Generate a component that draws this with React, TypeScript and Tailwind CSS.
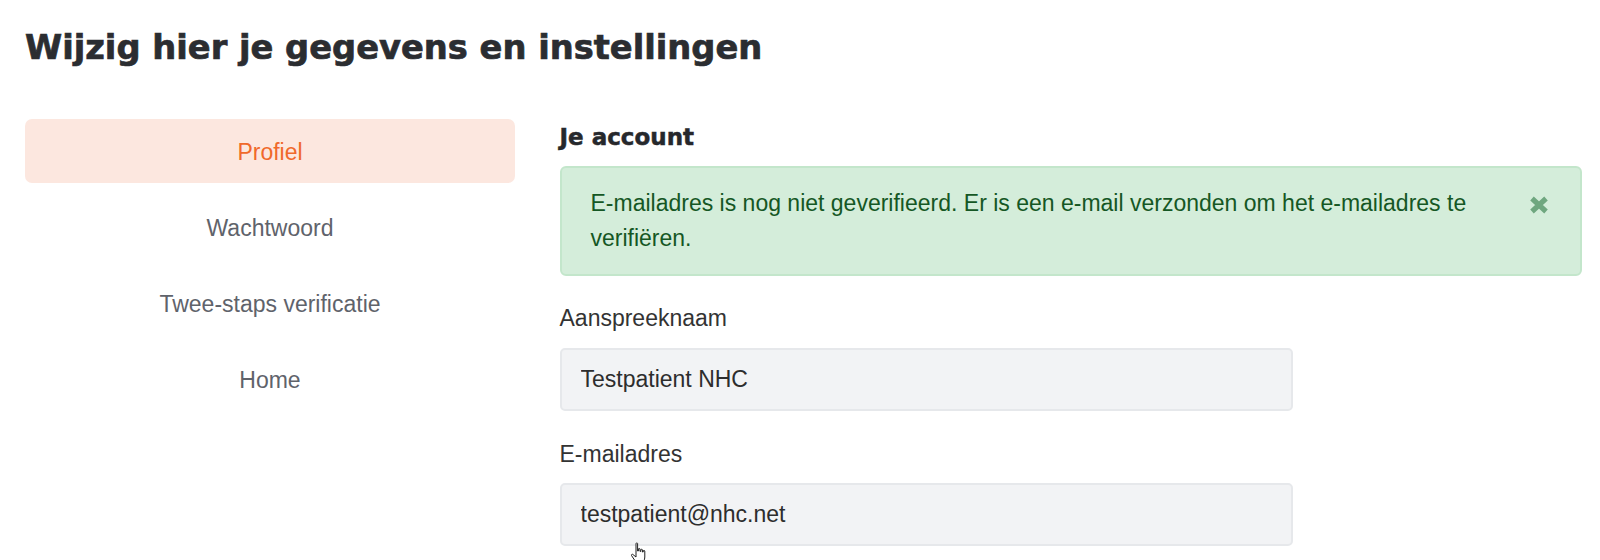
import React from 'react';

const navItems = [
  { label: 'Profiel', active: true },
  { label: 'Wachtwoord', active: false },
  { label: 'Twee-staps verificatie', active: false },
  { label: 'Home', active: false },
];

// Heavy ✖ like the font-awesome "times" glyph
const CloseIcon: React.FC = () => (
  <svg width="20" height="18" viewBox="0 0 20 18" aria-hidden>
    <path d="M3 2.5 L17 15.5 M17 2.5 L3 15.5" stroke="currentColor" strokeWidth="5.2" strokeLinecap="butt" fill="none" />
  </svg>
);

// mouse pointer left in the capture
const HandCursor: React.FC = () => (
  <svg width="18" height="22" viewBox="0 0 18 22" aria-hidden>
    <path
      d="M6 1.5 C6 0.8 7.6 0.8 7.6 1.5 L7.6 9 L8.4 9 L8.4 7 C8.4 6.3 10 6.3 10 7 L10 9.4 L10.8 9.4 L10.8 7.8 C10.8 7.1 12.4 7.1 12.4 7.8 L12.4 10 L13.2 10 L13.2 9 C13.2 8.3 14.8 8.3 14.8 9 L14.8 15 C14.8 18 13.5 20.5 11 20.5 L8 20.5 C6.3 20.5 5.5 19.5 4.5 18 L1.5 13.5 C1 12.7 2.2 11.8 2.9 12.5 L6 15 Z"
      fill="#ffffff"
      stroke="#1f1f1f"
      strokeWidth="1"
      strokeLinejoin="round"
    />
  </svg>
);

const Field: React.FC<{ label: string; value: string; first?: boolean }> = ({ label, value, first }) => (
  <div className={first ? 'mt-[25px]' : 'mt-[26px]'}>
    <label className="block text-[23px] leading-[34.5px] text-[#333333]">{label}</label>
    <input
      readOnly
      value={value}
      className="mt-3 block w-[733px] h-[63px] px-[19px] rounded-[5px] border-2 border-[#e6e8eb] bg-[#f2f3f5] text-[23px] text-[#2d2d2d] font-['Liberation_Sans',Arial,sans-serif] outline-none"
    />
  </div>
);

export default function App() {
  return (
    <div className="relative min-h-[560px] bg-white pl-[25px] pr-[18px] font-['Liberation_Sans',Arial,sans-serif] overflow-hidden">
      <h1 className="pt-[27px] text-[33.7px] leading-[42.5px] font-bold text-[#2b2d31] font-['DejaVu_Sans',sans-serif] [-webkit-text-stroke:0.7px_#2b2d31]">
        Wijzig hier je gegevens en instellingen
      </h1>

      <div className="mt-[49px] grid grid-cols-[490px_1fr] gap-x-[44.5px]">
        {/* Side nav */}
        <nav className="flex flex-col gap-3">
          {navItems.map((item) => (
            <a
              key={item.label}
              className={
                item.active
                  ? 'h-16 pt-[3px] flex items-center justify-center rounded-[7px] bg-[#fce7df] text-[#f0692b] text-[23px]'
                  : 'h-16 pt-[3px] flex items-center justify-center rounded-[7px] text-[#5f636b] text-[23px]'
              }
            >
              {item.label}
            </a>
          ))}
        </nav>

        {/* Account form */}
        <section className="pt-px">
          <h2 className="text-[23px] leading-[34.5px] font-bold text-[#26282c] font-['DejaVu_Sans',sans-serif] [-webkit-text-stroke:0.5px_#26282c]">
            Je account
          </h2>

          <div className="relative mt-3 rounded-[6px] border-2 border-[#c3e6cb] bg-[#d4edda] pl-[29px] pr-[92px] pt-[18px] pb-[19px] text-[23px] leading-[34.5px] text-[#155724]">
            E-mailadres is nog niet geverifieerd. Er is een e-mail verzonden om het e-mailadres te verifiëren.
            <button className="absolute top-[28px] right-[31px] text-[#6fa77f]">
              <CloseIcon />
            </button>
          </div>

          <Field first label="Aanspreeknaam" value="Testpatient NHC" />
          <Field label="E-mailadres" value="testpatient@nhc.net" />
        </section>
      </div>

      <div className="absolute left-[630px] top-[542px]">
        <HandCursor />
      </div>
    </div>
  );
}
